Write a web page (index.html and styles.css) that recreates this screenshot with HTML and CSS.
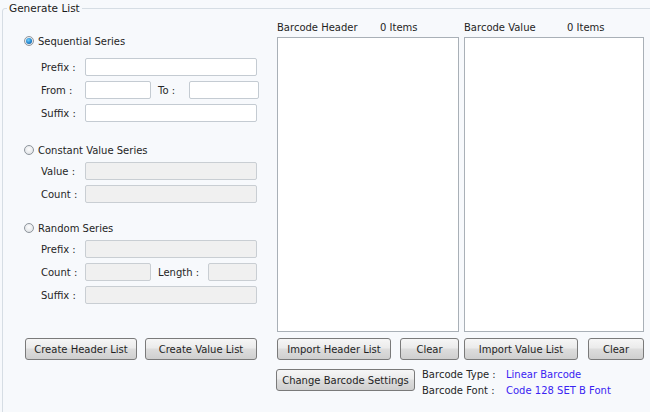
FILE: index.html
```html
<!DOCTYPE html>
<html lang="en">
<head>
  <meta charset="UTF-8">
  <title>Generate List</title>
  <link rel="stylesheet" href="styles.css">
</head>
<body>
  <fieldset class="group">
    <legend>Generate List</legend>
    <div class="layout">

      <div class="series-panel">
        <div class="series first">
          <div class="radio-row"><span class="radio checked"></span>Sequential Series</div>
          <div class="field-row"><label>Prefix :</label><span class="input wide"></span></div>
          <div class="field-row"><label>From :</label><span class="input short"></span><label class="mid">To :</label><span class="input to"></span></div>
          <div class="field-row"><label>Suffix :</label><span class="input wide"></span></div>
        </div>

        <div class="series second">
          <div class="radio-row"><span class="radio"></span>Constant Value Series</div>
          <div class="field-row"><label>Value :</label><span class="input wide disabled"></span></div>
          <div class="field-row"><label>Count :</label><span class="input wide disabled"></span></div>
        </div>

        <div class="series third">
          <div class="radio-row"><span class="radio"></span>Random Series</div>
          <div class="field-row"><label>Prefix :</label><span class="input wide disabled"></span></div>
          <div class="field-row"><label>Count :</label><span class="input short disabled"></span><label class="mid len">Length :</label><span class="input len-box disabled"></span></div>
          <div class="field-row"><label>Suffix :</label><span class="input wide disabled"></span></div>
        </div>

        <div class="create-buttons">
          <button class="btn create">Create Header List</button>
          <button class="btn create">Create Value List</button>
        </div>
      </div>

      <div class="list-panel">
        <div class="lists">
          <div class="list-col">
            <div class="list-head"><span class="list-title">Barcode Header</span><span>0 Items</span></div>
            <div class="list-box"></div>
            <div class="list-actions">
              <button class="btn import">Import Header List</button>
              <button class="btn clear">Clear</button>
            </div>
          </div>
          <div class="list-col right">
            <div class="list-head"><span class="list-title">Barcode Value</span><span>0 Items</span></div>
            <div class="list-box"></div>
            <div class="list-actions">
              <button class="btn import">Import Value List</button>
              <button class="btn clear clear-last">Clear</button>
            </div>
          </div>
        </div>

        <div class="settings">
          <button class="btn change">Change Barcode Settings</button>
          <div class="info">
            <div class="info-row"><span class="info-label">Barcode Type :</span><span class="info-value">Linear Barcode</span></div>
            <div class="info-row"><span class="info-label">Barcode Font :</span><span class="info-value">Code 128 SET B Font</span></div>
          </div>
        </div>
      </div>

    </div>
  </fieldset>
</body>
</html>
```

FILE: styles.css
```css
body {
  margin: 0;
  background-color: #f7f9fc;
  font-family: 'DejaVu Sans', Verdana, sans-serif;
  font-size: 10px;
  color: #1f1f1f;
  width: 650px;
  height: 412px;
  overflow: hidden;
}

.group {
  margin: 2px 0 0 2px;
  padding: 0;
  width: 660px;
  height: 420px;
  border: 1px solid #d6dde4;
  border-radius: 3px;
  box-sizing: border-box;
}

.group legend {
  margin-left: 4px;
  padding: 0 2px;
  font-size: 10.5px;
  line-height: 13px;
  color: #1a1a1a;
}

.layout {
  display: flex;
}

/* left side: the three series */
.series-panel {
  width: 274px;
  padding-left: 21px;
  box-sizing: border-box;
}

.series.first {
  padding-top: 20px;
}

.series.first .radio-row {
  margin-bottom: 11px;
}

.series.second {
  padding-top: 17px;
}

.series.third {
  padding-top: 14px;
}

.radio-row {
  display: flex;
  align-items: center;
  height: 12px;
  margin-bottom: 6px;
  font-size: 10px;
}

.radio {
  width: 10px;
  height: 10px;
  border: 1px solid #8e959c;
  border-radius: 50%;
  background: radial-gradient(circle at 50% 40%, #fdfdfd 0, #d9dde1 100%);
  margin-right: 4px;
  display: flex;
  align-items: center;
  justify-content: center;
  box-sizing: border-box;
}

.radio.checked::after {
  content: '';
  width: 6px;
  height: 6px;
  border-radius: 50%;
  background: radial-gradient(circle at 40% 35%, #6fd0ff 0, #1f7fc8 60%, #0d4f8e 100%);
}

.field-row {
  display: flex;
  align-items: center;
  height: 18px;
  margin-bottom: 5px;
}

.field-row label {
  width: 44px;
  padding-left: 17px;
  box-sizing: content-box;
  color: #262626;
}

.field-row label.mid {
  width: auto;
  padding-left: 7px;
  margin-right: 14px;
}

.field-row label.len {
  margin-right: 9px;
}

.input {
  height: 18px;
  border: 1px solid #c4cbd2;
  border-radius: 2px;
  background-color: #fff;
  box-sizing: border-box;
}

.input.disabled {
  background-color: #f0f0f0;
  border-color: #c9ced3;
}

.input.wide {
  width: 172px;
}

.input.short {
  width: 66px;
}

.input.to {
  width: 70px;
}

.input.len-box {
  width: 49px;
}

.create-buttons {
  display: flex;
  gap: 8px;
  margin-top: 34px;
  padding-left: 1px;
}

.btn {
  height: 22px;
  padding: 0;
  border: 1px solid #7a7a7a;
  border-radius: 3px;
  background: linear-gradient(#f6f6f6, #ebebeb 45%, #dddddd 50%, #cfcfcf);
  font-family: 'DejaVu Sans', Verdana, sans-serif;
  font-size: 10px;
  color: #1f1f1f;
  box-sizing: border-box;
}

.btn.create {
  width: 112px;
}

/* right side: lists */
.list-panel {
  padding-top: 6px;
}

.lists {
  display: flex;
  gap: 5px;
}

.list-col {
  width: 182px;
}

.list-col.right {
  width: 180px;
}

.list-head {
  display: flex;
  height: 13px;
  line-height: 13px;
  margin-bottom: 3px;
}

.list-title {
  width: 103px;
}

.list-box {
  height: 295px;
  border: 1px solid #a9b0b7;
  background-color: #fff;
  box-sizing: border-box;
}

.list-actions {
  display: flex;
  justify-content: space-between;
  margin-top: 6px;
}

.btn.import {
  width: 114px;
}

.btn.clear {
  width: 59px;
}

.btn.clear-last {
  width: 56px;
}

.settings {
  display: flex;
  margin-top: 9px;
  margin-left: -1px;
}

.btn.change {
  width: 139px;
}

.info {
  margin-left: 7px;
  margin-top: -2px;
}

.info-row {
  display: flex;
  height: 16px;
  line-height: 16px;
}

.info-label {
  width: 84px;
  color: #262626;
}

.info-value {
  color: #3a24f2;
}
```
